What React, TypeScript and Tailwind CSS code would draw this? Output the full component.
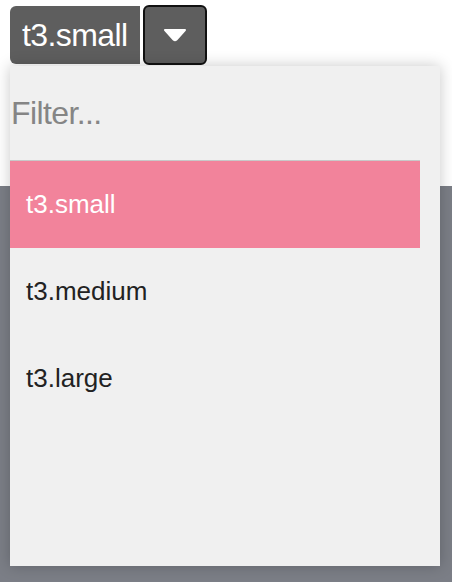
import { useState } from 'react';

const OPTIONS = ['t3.small', 't3.medium', 't3.large'];

export default function App() {
  const [selected, setSelected] = useState('t3.small');
  const [filter, setFilter] = useState('');

  const shown = OPTIONS.filter(o => o.includes(filter));

  return (
    <div className="relative w-[452px] h-[582px] bg-white overflow-hidden" style={{ fontFamily: '"Liberation Sans", Arial, sans-serif' }}>
      {/* page behind the menu */}
      <div className="absolute left-0 right-0 top-[186px] bottom-0 bg-[#7b7e86]" />

      {/* toggle */}
      <div className="relative flex items-center gap-[3px] pl-[10px] pt-[5px]">
        <div className="h-[58px] w-[130px] flex items-center pl-[12px] rounded-l-[6px] bg-[#5e5e5e] text-white text-[32px] tracking-[-0.6px]">
          {selected}
        </div>
        <button className="h-[60px] w-[64px] flex items-center justify-center rounded-[6px] border-2 border-[#111] bg-[#5e5e5e]">
          <svg width="24" height="14" viewBox="0 0 24 14">
            <path d="M2 2 H22 L13.5 11.5 Q12 13 10.5 11.5 Z" fill="white" stroke="white" strokeWidth="2" strokeLinejoin="round" />
          </svg>
        </button>
      </div>

      {/* dropdown menu */}
      <div className="absolute left-[10px] top-[66px] w-[430px] h-[500px] bg-[#f0f0f0] shadow-[0_0_14px_rgba(0,0,0,0.22)] flex flex-col">
        <input
          value={filter}
          onChange={e => setFilter(e.target.value)}
          placeholder="Filter..."
          className="h-[94px] w-full bg-transparent pl-[1px] text-[32px] tracking-[-0.6px] text-[#333] placeholder:text-[#858585] outline-none"
        />
        <ul className="w-[410px] border-t border-[#c8c8c8]">
          {shown.map(o => (
            <li
              key={o}
              onClick={() => setSelected(o)}
              className={
                o === selected
                  ? 'h-[87px] flex items-center pl-[16px] text-[26px] bg-[#f2839b] text-white cursor-pointer'
                  : 'h-[87px] flex items-center pl-[16px] text-[26px] text-[#222] cursor-pointer'
              }
            >
              {o}
            </li>
          ))}
        </ul>
      </div>
    </div>
  );
}
